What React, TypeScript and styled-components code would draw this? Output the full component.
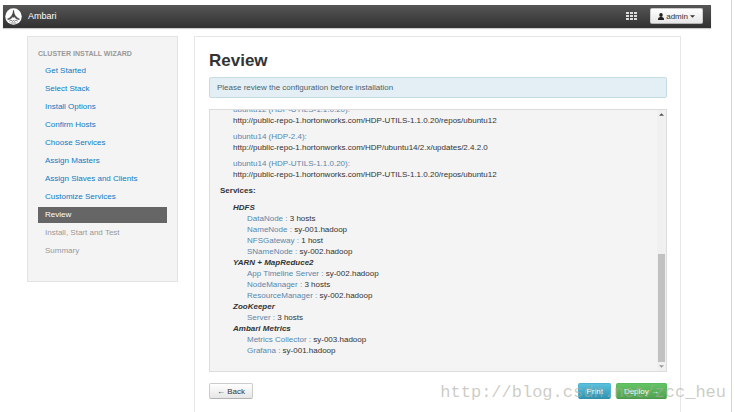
import React from "react";
import styled, { createGlobalStyle, css } from "styled-components";

const GlobalStyle = createGlobalStyle`
  * { box-sizing: border-box; }
  body {
    margin: 0;
    background: #fff;
    color: #333;
    font: 8px/11px "Liberation Sans", Arial, sans-serif;
  }
  button { font: inherit; cursor: pointer; }
`;

const Page = styled.div`
  position: relative;
  min-height: 100vh;
  margin-right: 3px;
  padding: 5px 20px 0 3px;
  border-right: 1px solid #d4d4d4;
  overflow: hidden;
`;

const TopBar = styled.header`
  display: flex;
  align-items: center;
  height: 23px;
  padding: 0 8px 0 2px;
  color: #fff;
  background: linear-gradient(#565656, #323232);
  border-bottom: 1px solid #333;
  box-shadow: 0 1px 1px rgba(0, 0, 0, 0.2);
`;

const Brand = styled.a`
  display: flex;
  align-items: center;
  gap: 6px;
  color: #fff;
  font-size: 9px;
  text-decoration: none;
`;

const BarActions = styled.div`
  display: flex;
  align-items: center;
  gap: 13px;
  margin-left: auto;
`;

const IconButton = styled.button`
  display: flex;
  padding: 0;
  background: none;
  border: 0;
`;

type Tone = "plain" | "info" | "success";

const tones = {
  plain: css`
    color: #333;
    background: linear-gradient(#fff, #e6e6e6);
    border-color: #ccc #ccc #b3b3b3;
  `,
  info: css`
    color: #fff;
    background: linear-gradient(#5bc0de, #2f96b4);
    border-color: #4fb2cf #4fb2cf #2f8fab;
  `,
  success: css`
    color: #fff;
    background: linear-gradient(#62c462, #51a351);
    border-color: #5cb85c #5cb85c #4a984a;
  `,
};

const Button = styled.button<{ $tone?: Tone }>`
  display: flex;
  align-items: center;
  gap: 2px;
  height: 16px;
  padding: 0 7px;
  border: 1px solid;
  border-radius: 2px;
  ${({ $tone = "plain" }) => tones[$tone]}
`;

const Layout = styled.div`
  display: flex;
  align-items: flex-start;
  gap: 16px;
  padding: 8px 30px 0 24px;
`;

const Sidebar = styled.nav`
  flex: 0 0 151px;
  padding: 11px 10px 22px;
  background: #f4f4f4;
  border: 1px solid #e3e3e3;
`;

const SidebarTitle = styled.h2`
  margin: 0 0 4px;
  color: #999;
  font-size: 7px;
  line-height: 11px;
  white-space: nowrap;
`;

const Steps = styled.ol`
  display: grid;
  gap: 2px;
  margin: 0;
  padding: 0;
  list-style: none;
`;

const stepBox = css`
  display: block;
  padding: 0 7px;
  line-height: 16px;
`;

const StepLink = styled.a<{ $current?: boolean }>`
  ${stepBox}
  color: ${({ $current }) => ($current ? "#fff" : "#0b7bc4")};
  background: ${({ $current }) => ($current ? "#666" : "none")};
  text-decoration: none;
`;

const StepPending = styled.span`
  ${stepBox}
  color: #999;
`;

const Content = styled.main`
  flex: 1;
  min-width: 0;
  min-height: calc(100vh - 36px);
  padding: 11px 13px 12px 14px;
  border: 1px solid #e6e6e6;
  border-bottom: 0;
`;

const Title = styled.h1`
  margin: 0 0 3px;
  font-size: 17px;
  line-height: 26px;
`;

const Notice = styled.p`
  margin: 0 0 11px;
  padding: 4px 7px;
  color: #4f5f68;
  background: #e4eff5;
  border: 1px solid #c3dde3;
  border-radius: 2px;
`;

const ReviewBox = styled.div`
  display: flex;
  height: 263px;
  background: #f4f4f4;
  border: 1px solid #dcdcdc;
`;

const ReviewScroll = styled.div`
  display: flex;
  flex: 1;
  flex-direction: column-reverse;
  overflow-y: auto;
  scrollbar-width: none;
`;

const ReviewText = styled.div`
  padding: 0 10px 15px;
`;

const ScrollTrack = styled.div`
  display: flex;
  flex-direction: column;
  align-items: center;
  width: 9px;
  padding: 3px 0;
  background: #f0f0f0;
`;

const ScrollThumb = styled.div`
  width: 7px;
  height: 108px;
  margin: auto 0 3px;
  background: #c1c1c1;
`;

const Repos = styled.dl`
  margin: 0 0 5px;
  padding-left: 13px;
`;

const RepoName = styled.dt`
  color: #5a86ab;
`;

const RepoUrl = styled.dd`
  margin: 0 0 5px;
`;

const SectionLabel = styled.h3`
  margin: 0 0 6px;
  font-size: 8px;
  line-height: 11px;
`;

const Services = styled.div`
  padding-left: 13px;
`;

const ServiceName = styled.h4`
  margin: 0;
  font-size: 8px;
  font-style: italic;
  line-height: 11px;
`;

const Components = styled.ul`
  margin: 0;
  padding: 0 0 0 14px;
  list-style: none;
`;

const ComponentName = styled.span`
  color: #5a86ab;
`;

const Footer = styled.footer`
  display: flex;
  gap: 5px;
  margin-top: 11px;
`;

const Spacer = styled.span`
  flex: 1;
`;

const Watermark = styled.div`
  position: absolute;
  right: 5px;
  bottom: 8px;
  color: rgba(170, 170, 160, 0.6);
  font: 17px/22px "Liberation Mono", monospace;
  pointer-events: none;
`;

const Logo = () => (
  <svg width="17" height="17" viewBox="0 0 34 34" aria-hidden="true">
    <circle cx="17" cy="17" r="16.5" fill="#fff" />
    <path d="M17 3q1 8 4 12t9 7l-2 2q-6-1-8-4l-3-4-3 4q-2 3-8 4l-2-2q6-3 9-7t4-12z" fill="#555" />
    <path d="M17 5v14M14 15h6" stroke="#444" strokeWidth="2.5" />
    <path d="M8 27l4-3 3 3 2-3 2 3 3-3 4 3M11 30h12" fill="none" stroke="#666" strokeWidth="1.5" />
  </svg>
);

const GridIcon = () => (
  <svg width="11" height="8" viewBox="0 0 11 8" fill="#ddd" aria-hidden="true">
    {[0, 3, 6].map((y) => [0, 4, 8].map((x) => <rect key={`${x}-${y}`} x={x} y={y} width="3" height="2" />))}
  </svg>
);

const UserIcon = () => (
  <svg width="6" height="7" viewBox="0 0 12 14" fill="#222" aria-hidden="true">
    <ellipse cx="6" cy="4" rx="3.5" ry="4" />
    <path d="M0 14v-2q0-3 4-4h4q4 1 4 4v2z" />
  </svg>
);

const Caret = ({ up, color = "#333" }: { up?: boolean; color?: string }) => (
  <svg width="5" height="3" viewBox="0 0 6 3" fill={color} aria-hidden="true">
    <path d={up ? "M0 3l3-3 3 3z" : "M0 0h6L3 3z"} />
  </svg>
);

const doneSteps = [
  "Get Started", "Select Stack", "Install Options", "Confirm Hosts",
  "Choose Services", "Assign Masters", "Assign Slaves and Clients", "Customize Services",
];
const pendingSteps = ["Install, Start and Test", "Summary"];

const utilsUrl = "http://public-repo-1.hortonworks.com/HDP-UTILS-1.1.0.20/repos/ubuntu12";
const repos = [
  ["ubuntu12 (HDP-UTILS-1.1.0.20):", utilsUrl],
  ["ubuntu14 (HDP-2.4):", "http://public-repo-1.hortonworks.com/HDP/ubuntu14/2.x/updates/2.4.2.0"],
  ["ubuntu14 (HDP-UTILS-1.1.0.20):", utilsUrl],
];

const services = [
  { name: "HDFS", parts: [["DataNode", "3 hosts"], ["NameNode", "sy-001.hadoop"], ["NFSGateway", "1 host"], ["SNameNode", "sy-002.hadoop"]] },
  { name: "YARN + MapReduce2", parts: [["App Timeline Server", "sy-002.hadoop"], ["NodeManager", "3 hosts"], ["ResourceManager", "sy-002.hadoop"]] },
  { name: "ZooKeeper", parts: [["Server", "3 hosts"]] },
  { name: "Ambari Metrics", parts: [["Metrics Collector", "sy-003.hadoop"], ["Grafana", "sy-001.hadoop"]] },
];

export default function App() {
  return (
    <Page>
      <GlobalStyle />
      <TopBar>
        <Brand href="#home"><Logo />Ambari</Brand>
        <BarActions>
          <IconButton type="button" aria-label="Views"><GridIcon /></IconButton>
          <Button type="button"><UserIcon />admin<Caret /></Button>
        </BarActions>
      </TopBar>
      <Layout>
        <Sidebar aria-label="Install steps">
          <SidebarTitle>CLUSTER INSTALL WIZARD</SidebarTitle>
          <Steps>
            {doneSteps.map((s) => <li key={s}><StepLink href="#step">{s}</StepLink></li>)}
            <li><StepLink href="#review" $current aria-current="step">Review</StepLink></li>
            {pendingSteps.map((s) => <li key={s}><StepPending>{s}</StepPending></li>)}
          </Steps>
        </Sidebar>
        <Content>
          <Title>Review</Title>
          <Notice>Please review the configuration before installation</Notice>
          <ReviewBox>
            <ReviewScroll>
              <ReviewText>
                <Repos>
                  {repos.map(([name, url]) => (
                    <React.Fragment key={name}>
                      <RepoName>{name}</RepoName>
                      <RepoUrl>{url}</RepoUrl>
                    </React.Fragment>
                  ))}
                </Repos>
                <SectionLabel>Services:</SectionLabel>
                <Services>
                  {services.map(({ name, parts }) => (
                    <section key={name}>
                      <ServiceName>{name}</ServiceName>
                      <Components>
                        {parts.map(([part, hosts]) => (
                          <li key={part}><ComponentName>{part} : </ComponentName>{hosts}</li>
                        ))}
                      </Components>
                    </section>
                  ))}
                </Services>
              </ReviewText>
            </ReviewScroll>
            <ScrollTrack aria-hidden="true">
              <Caret up color="#555" />
              <ScrollThumb />
              <Caret color="#999" />
            </ScrollTrack>
          </ReviewBox>
          <Footer>
            <Button type="button">← Back</Button>
            <Spacer />
            <Button type="button" $tone="info">Print</Button>
            <Button type="button" $tone="success">Deploy →</Button>
          </Footer>
        </Content>
      </Layout>
      <Watermark>http://blog.csdn.net/zcc_heu</Watermark>
    </Page>
  );
}
